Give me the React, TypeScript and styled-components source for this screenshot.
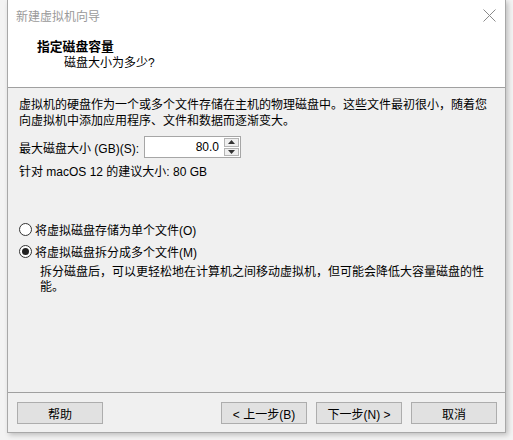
import { FC } from 'react'
import styled, { createGlobalStyle } from 'styled-components'

const GlobalStyle = createGlobalStyle`
  html, body {
    margin: 0;
    padding: 0;
    background: #f3f3f3;
  }
  body {
    font-family: "Liberation Sans", "Noto Sans CJK SC", sans-serif;
    font-size: 12px;
    color: #000;
    text-spacing-trim: space-all;
  }
`

const Page = styled.div`
  width: 513px;
  height: 440px;
  padding-left: 7px;
  box-sizing: border-box;
  overflow: hidden;
`

const Window = styled.div`
  width: 499px;
  height: 433px;
  box-sizing: border-box;
  border: 1px solid #a8a8a8;
  border-top: none;
  background: #f0f0f0;
  display: flex;
  flex-direction: column;
  box-shadow: 2px 2px 5px rgba(0, 0, 0, 0.22);
`

const TitleBar = styled.div`
  height: 30px;
  background: #fff;
  display: flex;
  align-items: center;
  justify-content: space-between;
  padding: 0 9px 0 8px;
`

const Title = styled.span`
  color: #9a9a9a;
  font-size: 12px;
`

const Header = styled.div`
  height: 58px;
  box-sizing: border-box;
  background: #fff;
  border-bottom: 1px solid #a0a0a0;
  padding: 9px 0 0 29px;
  line-height: 16px;
`

const HeaderTitle = styled.div`
  font-weight: bold;
  font-size: 12.8px;
`

const HeaderSub = styled.div`
  padding-left: 27px;
`

const Body = styled.div`
  flex: 1;
  padding: 9px 0 0 11px;
  display: flex;
  flex-direction: column;
`

const Paragraph = styled.p<{ $indent?: number; $lh?: number }>`
  margin: 0;
  padding-left: ${(p) => p.$indent ?? 0}px;
  line-height: ${(p) => p.$lh ?? 16}px;
  white-space: nowrap;
`

const SizeRow = styled.div`
  display: flex;
  align-items: center;
  gap: 5px;
  margin-top: 7px;
`

const Spinner = styled.div`
  width: 97px;
  height: 22px;
  box-sizing: border-box;
  border: 1px solid #a6a6a6;
  background: #fff;
  display: flex;
`

const SpinValue = styled.div`
  flex: 1;
  text-align: right;
  padding-right: 5px;
  line-height: 20px;
`

const SpinButtons = styled.div`
  width: 15px;
  display: flex;
  flex-direction: column;
  padding: 1px 1px 1px 0;
  gap: 1px;
`

const SpinButton = styled.div`
  flex: 1;
  border: 1px solid #b4b4b4;
  background: #efefef;
  display: flex;
  align-items: center;
  justify-content: center;
`

const Recommend = styled(Paragraph)`
  margin-top: 6px;
`

const Options = styled.div`
  margin-top: 40px;
  display: flex;
  flex-direction: column;
  gap: 4px;
`

const RadioRow = styled.label`
  display: flex;
  align-items: center;
  gap: 3px;
  height: 18px;
`

const RadioDot = styled.span<{ $checked?: boolean }>`
  width: 13px;
  height: 13px;
  box-sizing: border-box;
  border-radius: 50%;
  border: 1px solid #333;
  background: #fff;
  display: flex;
  align-items: center;
  justify-content: center;
  &::after {
    content: '';
    width: 7px;
    height: 7px;
    border-radius: 50%;
    background: ${(p) => (p.$checked ? '#222' : 'transparent')};
  }
`

const Note = styled(Paragraph)`
  margin-top: 5px;
`

const Footer = styled.div`
  height: 40px;
  box-sizing: border-box;
  border-top: 1px solid #a0a0a0;
  padding: 9px 8px 0 9px;
  display: flex;
  gap: 9px;
`

const Button = styled.button<{ $pushRight?: boolean }>`
  width: 86px;
  height: 22px;
  box-sizing: border-box;
  border: 1px solid #adadad;
  background: #e1e1e1;
  font: inherit;
  color: #000;
  padding: 0;
  margin-left: ${(p) => (p.$pushRight ? 'auto' : '0')};
`

const Triangle: FC<{ up?: boolean }> = ({ up }) => (
  <svg width="7" height="4" viewBox="0 0 7 4">
    <path d={up ? 'M0 4 L3.5 0 L7 4 Z' : 'M0 0 L3.5 4 L7 0 Z'} fill="#333" />
  </svg>
)

const App: FC = () => (
  <Page>
    <GlobalStyle />
    <Window>
      <TitleBar>
        <Title>新建虚拟机向导</Title>
        <svg width="13" height="13" viewBox="0 0 13 13">
          <path d="M0.5 0.5 L12.5 12.5 M12.5 0.5 L0.5 12.5" stroke="#8a8a8a" strokeWidth="1" />
        </svg>
      </TitleBar>
      <Header>
        <HeaderTitle>指定磁盘容量</HeaderTitle>
        <HeaderSub>磁盘大小为多少?</HeaderSub>
      </Header>
      <Body>
        <Paragraph>
          虚拟机的硬盘作为一个或多个文件存储在主机的物理磁盘中。这些文件最初很小，随着您
          <br />
          向虚拟机中添加应用程序、文件和数据而逐渐变大。
        </Paragraph>
        <SizeRow>
          <span>最大磁盘大小 (GB)(S):</span>
          <Spinner>
            <SpinValue>80.0</SpinValue>
            <SpinButtons>
              <SpinButton>
                <Triangle up />
              </SpinButton>
              <SpinButton>
                <Triangle />
              </SpinButton>
            </SpinButtons>
          </Spinner>
        </SizeRow>
        <Recommend>针对 macOS 12 的建议大小: 80 GB</Recommend>
        <Options>
          <RadioRow>
            <RadioDot />
            将虚拟磁盘存储为单个文件(O)
          </RadioRow>
          <RadioRow>
            <RadioDot $checked />
            将虚拟磁盘拆分成多个文件(M)
          </RadioRow>
        </Options>
        <Note $indent={21} $lh={15}>
          拆分磁盘后，可以更轻松地在计算机之间移动虚拟机，但可能会降低大容量磁盘的性
          <br />
          能。
        </Note>
      </Body>
      <Footer>
        <Button>帮助</Button>
        <Button $pushRight>&lt; 上一步(B)</Button>
        <Button>下一步(N) &gt;</Button>
        <Button>取消</Button>
      </Footer>
    </Window>
  </Page>
)

export default App
